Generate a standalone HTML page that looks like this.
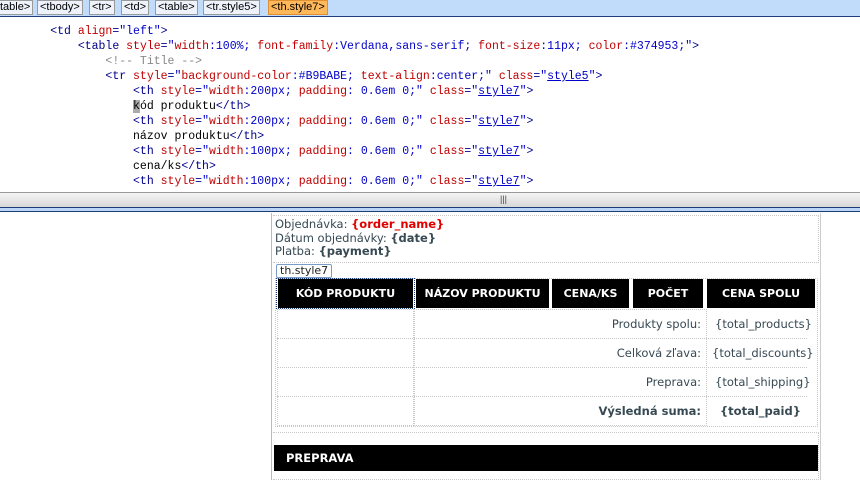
<!DOCTYPE html>
<html><head><meta charset="utf-8"><style>
*{margin:0;padding:0;box-sizing:border-box}
body{width:860px;height:480px;overflow:hidden;background:#fff;position:relative;font-family:"Liberation Sans",sans-serif}
#tb{position:absolute;left:0;top:0;width:860px;height:17px;background:#c1dbfa;border-bottom:1px solid #1e3c78}
.tag{position:absolute;top:0;height:15px;border:1px solid #9a9a9a;background:#eef3fb;font-size:11px;line-height:13px;padding:0 2px;color:#000}
#code{position:absolute;left:-5px;top:24px;font-family:"Liberation Mono",monospace;font-size:11.5px;line-height:15px;white-space:pre;color:#000}
.t{color:#00008b}.a{color:#c00000}.v{color:#0000c8}.c{color:#888}.u{text-decoration:underline}
#split{position:absolute;left:0;top:192px;width:860px;height:15px;background:linear-gradient(#f4f4f4,#d8d8d8);border-top:1px solid #999}
#bl{position:absolute;left:0;top:207px;width:860px;height:5px;background:#bcd6f5;border-top:1px solid #1e3c78;border-bottom:1px solid #1e3c78}
.d{position:absolute}
.txt{font-family:"DejaVu Sans",Verdana,sans-serif;font-size:11.5px;color:#374953}
.h{position:absolute;top:279px;height:29px;background:#000;color:#fff;font-family:"DejaVu Sans",sans-serif;font-weight:bold;font-size:11px;line-height:29px;text-align:center}
.dot{border:1px dotted #c8c8c8}
.r{position:absolute;font-family:"DejaVu Sans",sans-serif;font-size:11.5px;color:#374953;line-height:14px}
</style></head><body>
<div id="tb">
<span class="tag" style="left:-3px">table&gt;</span>
<span class="tag" style="left:37px">&lt;tbody&gt;</span>
<span class="tag" style="left:89px">&lt;tr&gt;</span>
<span class="tag" style="left:121px">&lt;td&gt;</span>
<span class="tag" style="left:155px">&lt;table&gt;</span>
<span class="tag" style="left:203px">&lt;tr.style5&gt;</span>
<span class="tag" style="left:268px;background:#ffb85a;border-color:#e09030">&lt;th.style7&gt;</span>
</div>
<div id="code"><span>        </span><span class="t">&lt;td </span><span class="a">align</span><span class="t">=</span><span class="v">"left"</span><span class="t">&gt;</span>
<span>            </span><span class="t">&lt;table </span><span class="a">style</span><span class="t">=</span><span class="v">"</span><span class="a">width</span><span class="v">:100%; </span><span class="a">font-family</span><span class="v">:Verdana,sans-serif; </span><span class="a">font-size</span><span class="v">:11px; </span><span class="a">color</span><span class="v">:#374953;"</span><span class="t">&gt;</span>
<span>                </span><span class="c">&lt;!-- Title --&gt;</span>
<span>                </span><span class="t">&lt;tr </span><span class="a">style</span><span class="t">=</span><span class="v">"</span><span class="a">background-color</span><span class="v">:#B9BABE; </span><span class="a">text-align</span><span class="v">:center;" </span><span class="a">class</span><span class="t">=</span><span class="v">"<span class="u">style5</span>"</span><span class="t">&gt;</span>
<span>                    </span><span class="t">&lt;th </span><span class="a">style</span><span class="t">=</span><span class="v">"</span><span class="a">width</span><span class="v">:200px; </span><span class="a">padding</span><span class="v">: 0.6em 0;" </span><span class="a">class</span><span class="t">=</span><span class="v">"<span class="u">style7</span>"</span><span class="t">&gt;</span>
<span>                    </span><span style="background:#aaa">k</span>ód produktu<span class="t">&lt;/th&gt;</span>
<span>                    </span><span class="t">&lt;th </span><span class="a">style</span><span class="t">=</span><span class="v">"</span><span class="a">width</span><span class="v">:200px; </span><span class="a">padding</span><span class="v">: 0.6em 0;" </span><span class="a">class</span><span class="t">=</span><span class="v">"<span class="u">style7</span>"</span><span class="t">&gt;</span>
<span>                    </span>názov produktu<span class="t">&lt;/th&gt;</span>
<span>                    </span><span class="t">&lt;th </span><span class="a">style</span><span class="t">=</span><span class="v">"</span><span class="a">width</span><span class="v">:100px; </span><span class="a">padding</span><span class="v">: 0.6em 0;" </span><span class="a">class</span><span class="t">=</span><span class="v">"<span class="u">style7</span>"</span><span class="t">&gt;</span>
<span>                    </span>cena/ks<span class="t">&lt;/th&gt;</span>
<span>                    </span><span class="t">&lt;th </span><span class="a">style</span><span class="t">=</span><span class="v">"</span><span class="a">width</span><span class="v">:100px; </span><span class="a">padding</span><span class="v">: 0.6em 0;" </span><span class="a">class</span><span class="t">=</span><span class="v">"<span class="u">style7</span>"</span><span class="t">&gt;</span></div>
<div id="split"><span style="position:absolute;left:500px;top:1px;font-size:9px;color:#444">|||</span></div>
<div id="bl"></div>
<div class="d" style="left:271px;top:213px;width:1px;height:267px;background:#bbb"></div>
<div class="d" style="left:820px;top:213px;width:1px;height:267px;background:#ccc"></div>
<div class="d dot" style="left:273px;top:215px;width:546px;height:48px;border-left:none"></div>
<div class="d txt" style="left:275px;top:218px;line-height:13.5px">Objednávka: <b style="color:#e00000">{order_name}</b><br>Dátum objednávky: <b>{date}</b><br>Platba: <b>{payment}</b></div>
<div class="d" style="left:276px;top:264px;height:14px;padding:0 3px;border:1px solid #7a9cc8;border-radius:2px;font-family:'DejaVu Sans',sans-serif;font-size:11px;line-height:12px;color:#222;background:#fff">th.style7</div>
<div class="d dot" style="left:275px;top:278px;width:543px;height:149px"></div>
<div class="h" style="left:278px;width:135px">KÓD PRODUKTU</div>
<div class="h" style="left:416px;width:133px">NÁZOV PRODUKTU</div>
<div class="h" style="left:552px;width:77px">CENA/KS</div>
<div class="h" style="left:633px;width:70px">POČET</div>
<div class="h" style="left:707px;width:108px">CENA SPOLU</div>
<div class="d" style="left:276px;top:278px;width:139px;height:31px;border:1px dotted #1e3c78"></div>
<div class="d dot" style="left:277px;top:309px;width:137px;height:117px"></div>
<div class="d dot" style="left:414px;top:309px;width:293px;height:117px"></div>
<div class="d dot" style="left:277px;top:338px;width:530px;height:1px;border-width:1px 0 0"></div>
<div class="d dot" style="left:277px;top:367px;width:530px;height:1px;border-width:1px 0 0"></div>
<div class="d dot" style="left:277px;top:396px;width:530px;height:1px;border-width:1px 0 0"></div>
<div class="r" style="right:159px;top:317px">Produkty spolu:</div>
<div class="r" style="left:715px;top:317px">{total_products}</div>
<div class="r" style="right:159px;top:346px">Celková zľava:</div>
<div class="r" style="left:712px;top:346px">{total_discounts}</div>
<div class="r" style="right:159px;top:375px">Preprava:</div>
<div class="r" style="left:715px;top:375px">{total_shipping}</div>
<div class="r" style="right:159px;top:404px;font-weight:bold">Výsledná suma:</div>
<div class="r" style="left:720px;top:404px;font-weight:bold">{total_paid}</div>
<div class="d dot" style="left:273px;top:432px;width:546px;height:48px;border-left:none"></div>
<div class="d" style="left:274px;top:445px;width:544px;height:26px;background:#000;color:#fff;font-family:'DejaVu Sans',sans-serif;font-weight:bold;font-size:11.5px;line-height:26px;padding-left:12px">PREPRAVA</div>
</body></html>
